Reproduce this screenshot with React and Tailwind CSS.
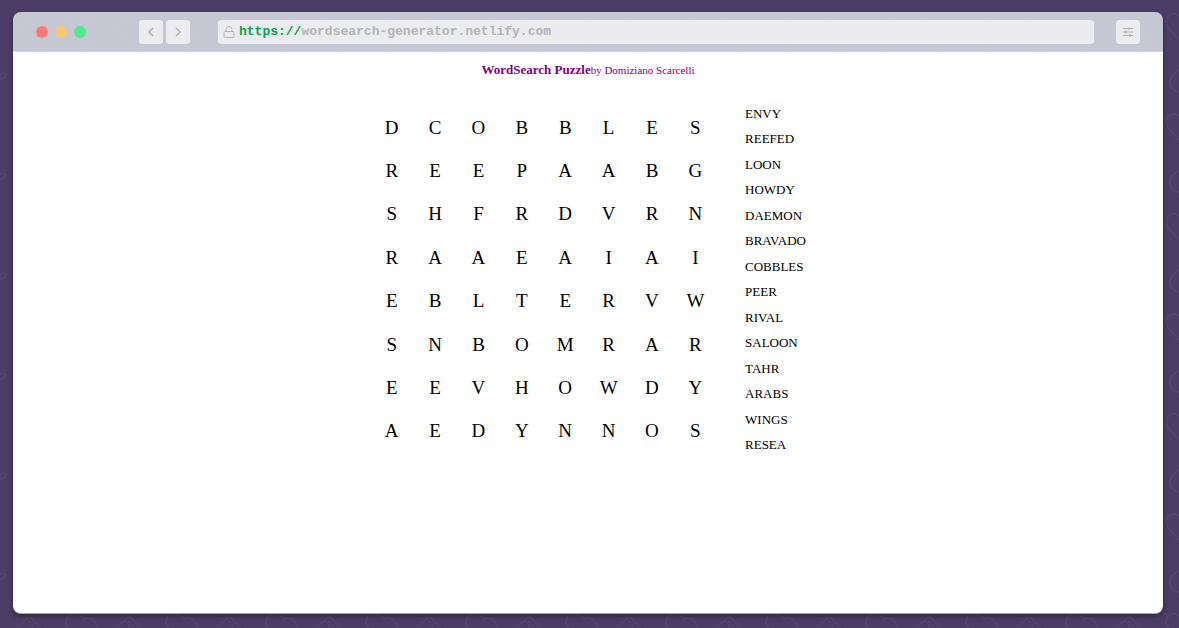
import React from "react";

const GRID = ["DCOBBLES", "REEPAABG", "SHFRDVRN", "RAAEAIAI", "EBLTERVW", "SNBOMRAR", "EEVHOWDY", "AEDYNNOS"];

const WORDS = [
  "ENVY", "REEFED", "LOON", "HOWDY", "DAEMON", "BRAVADO", "COBBLES",
  "PEER", "RIVAL", "SALOON", "TAHR", "ARABS", "WINGS", "RESEA",
];

function Backdrop() {
  return (
    <svg className="absolute inset-0 -z-10 h-full w-full" aria-hidden="true">
      <defs>
        <pattern id="doodles" width="100" height="100" patternUnits="userSpaceOnUse">
          <g fill="none" stroke="#ffffff" strokeOpacity="0.045" strokeWidth="1.5">
            <path d="M80 16C74 11 66 15 66 22C66 26 68 28 71 31L86 47C87 48 89 48 90 46L96 36C99 30 98 21 89 18C86 17 85 18 84 19C84 17 82 16 80 16Z" />
            <path d="M17 28L27 18Q29 16 31 18L50 38Q52 40 50 42L42 49Q40 51 38 49L17 31Q16 29 17 28Z" />
            <path d="M84 66L73 75C69 79 69 86 73 89C77 93 83 93 88 89L99 78C103 73 108 72 105 77L93 87" />
            <path d="M-16 89L-1 75C3 72 8 73 5 77L-7 84" />
          </g>
          <g fill="#ffffff" fillOpacity="0.06">
            <circle cx="29" cy="22" r="1" />
            <circle cx="32" cy="25" r="1" />
            <circle cx="29" cy="26" r="1" />
            <circle cx="33" cy="28" r="1" />
          </g>
        </pattern>
      </defs>
      <rect y="12" width="100%" height="100%" fill="url(#doodles)" />
    </svg>
  );
}

function Toolbar() {
  const button = "flex size-6 items-center justify-center rounded-[3px] bg-white/65 text-[#b1b1b1]";
  return (
    <header className="flex h-10 items-center rounded-t-lg border-y border-t-white/10 border-b-white/30 bg-[#e3eaef]/80 pr-[23px] pb-px pl-[23px]">
      <div className="flex gap-[7px]">
        <span className="size-3 rounded-full bg-[#ff7676]" />
        <span className="size-3 rounded-full bg-[#ffc76b]" />
        <span className="size-3 rounded-full bg-[#50ea8c]" />
      </div>
      <nav className="ml-[53px] flex gap-[3px]">
        <button type="button" aria-label="Back" className={button}>
          <svg width="10" height="10" viewBox="0 0 10 10" fill="none" stroke="currentColor" strokeWidth="1.5"><path d="M7 1L3 5L7 9" /></svg>
        </button>
        <button type="button" aria-label="Forward" className={button}>
          <svg width="10" height="10" viewBox="0 0 10 10" fill="none" stroke="currentColor" strokeWidth="1.5"><path d="M3 1L7 5L3 9" /></svg>
        </button>
      </nav>
      <div className="mr-[22px] ml-7 flex h-6 flex-1 items-center gap-1 rounded-[3px] bg-white/65 pl-[5px]">
        <svg width="12" height="14" viewBox="0 0 12 14" fill="none" stroke="#b5b5b5" aria-hidden="true">
          <rect x="1" y="6.5" width="10" height="6" rx="1" />
          <path d="M3 6.5V4.5A3 3 0 0 1 9 4.5V6.5" />
        </svg>
        <a href="https://wordsearch-generator.netlify.com" className="font-['Liberation_Mono',monospace] text-[13px] leading-4 font-bold text-[#b4b4b4]">
          <span className="text-[#0ba14b]">https://</span>wordsearch-generator.netlify.com
        </a>
      </div>
      <button type="button" aria-label="Menu" className={button}>
        <svg width="12" height="10" viewBox="0 0 12 10" fill="#b1b1b1">
          <path d="M1 1h10v1H1zM1 4.500h10v1H1zM1 8h10v1H1z" />
          <path d="M6 .5h2v2H6zM3 4h2v2H3zM7 7.500h2v2H7z" />
        </svg>
      </button>
    </header>
  );
}

export default function App() {
  return (
    <div className="relative isolate flex min-h-screen bg-[#4b3d66] pt-3 pr-4 pb-[14px] pl-[13px] font-['Liberation_Serif',serif] text-black">
      <Backdrop />
      <div className="flex flex-1 flex-col rounded-lg shadow-[0_2px_5px_rgba(0,0,0,0.4)]">
        <Toolbar />
        <main className="flex flex-1 flex-col items-center rounded-b-lg border-b border-[#a9a2b7] bg-white">
          <div className="mt-2 flex items-baseline leading-5 text-[#800080]">
            <h1 className="text-[13px] font-bold">WordSearch Puzzle</h1>
            <a href="#author" className="text-[11px]">by Domiziano Scarcelli</a>
          </div>
          <div className="mt-[21px] flex items-center gap-7">
            <table className="size-[347px] table-fixed border-collapse text-center text-[19px] leading-6">
              <tbody>
                {GRID.map((row, r) => (
                  <tr key={r}>
                    {row.split("").map((letter, c) => (
                      <td key={c} className="p-0">{letter}</td>
                    ))}
                  </tr>
                ))}
              </tbody>
            </table>
            <ul className="grid h-[357px] auto-rows-fr items-center text-[13px] leading-5">
              {WORDS.map((word) => (
                <li key={word}>{word}</li>
              ))}
            </ul>
          </div>
        </main>
      </div>
    </div>
  );
}
